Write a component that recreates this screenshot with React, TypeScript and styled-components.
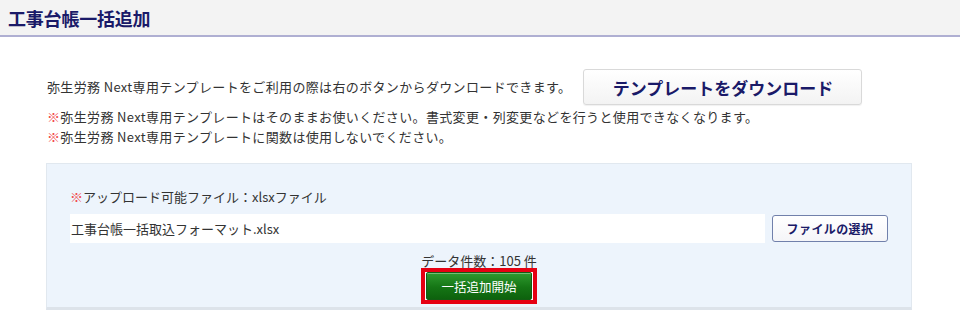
import React from "react";
import styled, { createGlobalStyle } from "styled-components";

const GlobalStyle = createGlobalStyle`
  html, body { margin: 0; padding: 0; background: #ffffff; }
  body {
    font-family: "Noto Sans CJK JP", "Noto Sans", sans-serif;
    color: #333333;
    font-size: 13px;
  }
  * { box-sizing: border-box; }
`;

const Page = styled.div`
  width: 960px;
  height: 326px;
  overflow: hidden;
`;

const Header = styled.header`
  height: 37px;
  background: #f3f3f3;
  border-bottom: 2px solid #afafd2;
  display: flex;
  align-items: center;
  padding-left: 8px;
`;

const Title = styled.h1`
  margin: 0;
  font-size: 18px;
  font-weight: 700;
  color: #1a1a68;
  letter-spacing: -0.2px;
  line-height: 1;
`;

const Content = styled.main`
  padding: 32px 48px 0 46px;
`;

const IntroRow = styled.div`
  display: flex;
  align-items: center;
  padding-left: 1px;
`;

const Text = styled.span`
  font-size: 13px;
  color: #333333;
  line-height: 20px;
  letter-spacing: 0.35px;
  white-space: nowrap;
`;

const DownloadButton = styled.button`
  margin-left: 12px;
  width: 279px;
  height: 36px;
  border: 1px solid #d9d9d9;
  border-radius: 3px;
  background: linear-gradient(#ffffff, #f3f3f3);
  box-shadow: 0 1px 1px rgba(0, 0, 0, 0.06);
  font-family: "Noto Sans CJK JP", sans-serif;
  font-size: 17px;
  font-weight: 700;
  color: #1a1a68;
  cursor: pointer;
  padding: 0;
`;

const Notes = styled.div`
  margin-top: 2px;
  padding-left: 1px;
  display: flex;
  flex-direction: column;
`;

const Mark = styled.span`
  color: #f24a4a;
`;

const Panel = styled.section`
  margin-top: 16px;
  background: #edf4fc;
  border: 1px solid #e1e8ef;
  border-bottom: 3px solid #dde3ea;
  padding: 23px 23px 3px 23px;
  display: flex;
  flex-direction: column;
`;

const UploadLabel = styled.div`
  font-size: 13px;
  line-height: 20px;
  color: #333333;
`;

const FileRow = styled.div`
  margin-top: 7px;
  display: flex;
  align-items: center;
  gap: 7px;
`;

const FileName = styled.div`
  flex: 1;
  height: 29px;
  background: #ffffff;
  display: flex;
  align-items: center;
  padding-left: 1px;
  font-size: 13px;
  color: #333333;
`;

const SelectButton = styled.button`
  width: 116px;
  height: 27px;
  border: 1px solid #7180ab;
  border-radius: 3px;
  background: linear-gradient(#ffffff, #f5f5f8);
  font-family: "Noto Sans CJK JP", sans-serif;
  font-size: 12px;
  font-weight: 700;
  letter-spacing: 0.4px;
  color: #1a1a68;
  padding: 0;
  cursor: pointer;
`;

const Footer = styled.div`
  margin-top: 11px;
  display: flex;
  flex-direction: column;
  align-items: center;
`;

const Count = styled.div`
  font-size: 13px;
  line-height: 14px;
  color: #333333;
`;

const Highlight = styled.div`
  border: 4px solid #e60012;
  background: #ffffff;
  padding: 0 1px;
  display: flex;
`;

const StartButton = styled.button`
  width: 106px;
  height: 28px;
  border: 1px solid #135d13;
  border-radius: 2px;
  background: linear-gradient(#2f9a2f, #157515 55%, #0d620d);
  box-shadow: inset 0 1px 0 rgba(255, 255, 255, 0.35);
  color: #ffffff;
  font-family: "Noto Sans CJK JP", sans-serif;
  font-size: 12.5px;
  padding: 0;
  cursor: pointer;
`;

export default function App() {
  return (
    <Page>
      <GlobalStyle />
      <Header>
        <Title>工事台帳一括追加</Title>
      </Header>
      <Content>
        <IntroRow>
          <Text>弥生労務 Next専用テンプレートをご利用の際は右のボタンからダウンロードできます。</Text>
          <DownloadButton>テンプレートをダウンロード</DownloadButton>
        </IntroRow>
        <Notes>
          <Text>
            <Mark>※</Mark>弥生労務 Next専用テンプレートはそのままお使いください。書式変更・列変更などを行うと使用できなくなります。
          </Text>
          <Text>
            <Mark>※</Mark>弥生労務 Next専用テンプレートに関数は使用しないでください。
          </Text>
        </Notes>
        <Panel>
          <UploadLabel>
            <Mark>※</Mark>アップロード可能ファイル：xlsxファイル
          </UploadLabel>
          <FileRow>
            <FileName>工事台帳一括取込フォーマット.xlsx</FileName>
            <SelectButton>ファイルの選択</SelectButton>
          </FileRow>
          <Footer>
            <Count>データ件数：105 件</Count>
            <Highlight>
              <StartButton>一括追加開始</StartButton>
            </Highlight>
          </Footer>
        </Panel>
      </Content>
    </Page>
  );
}
